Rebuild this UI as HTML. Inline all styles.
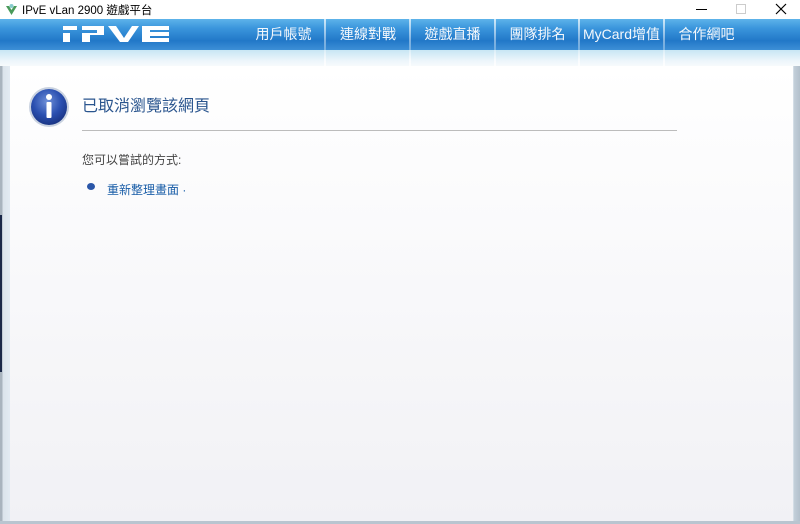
<!DOCTYPE html>
<html><head><meta charset="utf-8"><style>
*{margin:0;padding:0;box-sizing:border-box}
body{width:800px;height:524px;overflow:hidden;background:#fff;font-family:"Liberation Sans","Noto Sans CJK TC",sans-serif;position:relative}
.title{position:absolute;left:0;top:0;width:800px;height:19px;background:#fff;font-size:11.5px;color:#000}
.title .t{position:absolute;left:22px;top:2px}
.nav{position:absolute;left:0;top:19px;width:800px;height:31px;background:linear-gradient(#5eb3ea 0%,#3a95dc 30%,#2278c8 70%,#3d8fd6 100%)}
.glow{position:absolute;left:0;top:50px;width:800px;height:16px;background:linear-gradient(#c8e6f4,#eef6fb 70%,#f7fafc)}
.item{position:absolute;top:19px;height:47px;color:#f4f8fc;font-size:14px;text-align:center;line-height:30px;font-family:"Liberation Sans","Noto Sans CJK TC",sans-serif}
.sep{position:absolute;top:19px;width:2px;height:47px;background:linear-gradient(rgba(255,255,255,.7),rgba(255,255,255,.3) 65%,rgba(255,255,255,.8))}
.frame{position:absolute;left:0;top:66px;width:800px;height:458px;background:linear-gradient(90deg,#a9b4be 0,#a9b4be 2px,#dbe4ec 3px,#e3ebf2 10px,#e3ebf2 793px,#c3cfd9 794px,#b3c0cc 800px)}
.bottom{position:absolute;left:0;top:521px;width:800px;height:3px;background:#b9c5d0}
.content{position:absolute;left:10px;top:66px;width:783px;height:455px;background:linear-gradient(#ffffff,#f1f1f5)}
.leftdark{position:absolute;left:0;top:215px;width:2px;height:157px;background:#1a2848}
.h1{position:absolute;left:82px;top:92px;font-size:16px;color:#2a558e}
.hr{position:absolute;left:82px;top:130px;width:595px;height:1px;background:#bcbcbc}
.p{position:absolute;left:82px;top:151px;font-size:12px;color:#444}
.link{position:absolute;left:107px;top:181px;font-size:12px;color:#1a5ea8}
.dot{position:absolute;left:87px;top:183px;width:8px;height:7px;border-radius:50%;background:#2a56a8}
</style></head><body>
<div class="title">
<svg style="position:absolute;left:5px;top:3px" width="13" height="13" viewBox="0 0 13 13"><path d="M1 3 L6.5 12 L12 3 L9 3 L6.5 7 L4 3Z" fill="#4a9a5a"/><circle cx="6.5" cy="3" r="2" fill="#8cc"/></svg>
<span class="t">IPvE vLan 2900 遊戲平台</span>
<div style="position:absolute;left:696px;top:9px;width:11px;height:1px;background:#000"></div>
<div style="position:absolute;left:736px;top:4px;width:10px;height:10px;border:1px solid #ccc"></div>
<svg style="position:absolute;left:775px;top:3px" width="12" height="12"><path d="M1 1L11 11M11 1L1 11" stroke="#000" stroke-width="1.2"/></svg>
</div>
<div class="nav"></div>
<div class="glow"></div>
<svg style="position:absolute;left:62px;top:26px" width="110" height="17" viewBox="0 0 110 17">
<g fill="#fff"><rect x="1" y="0" width="14" height="4"/><rect x="1" y="7" width="7" height="9"/>
<path d="M20 0 H42 V9 H28 V16 H20 V7 H35 V4 H20Z"/>
<path d="M46 0 H54 L62 12 L70 0 H77 L66 16 H58Z"/>
<path d="M80 0 H107 V4 H88 V6 H107 V10 H88 V12 H107 V16 H80Z"/></g></svg>
<div class="item" style="left:242px;width:83px">用戶帳號</div>
<div class="sep" style="left:324px"></div>
<div class="item" style="left:326px;width:84px">連線對戰</div>
<div class="sep" style="left:409px"></div>
<div class="item" style="left:411px;width:83px">遊戲直播</div>
<div class="sep" style="left:494px"></div>
<div class="item" style="left:496px;width:83px">團隊排名</div>
<div class="sep" style="left:578px"></div>
<div class="item" style="left:580px;width:83px;font-size:14px">MyCard增值</div>
<div class="sep" style="left:663px"></div>
<div class="item" style="left:665px;width:83px">合作網吧</div>
<div class="frame"></div>
<div class="bottom"></div>
<div class="content"></div>
<div class="leftdark"></div>
<svg style="position:absolute;left:28px;top:86px" width="42" height="42" viewBox="0 0 42 42">
<defs><radialGradient id="g" cx="45%" cy="35%" r="65%"><stop offset="0" stop-color="#6f90d8"/><stop offset=".6" stop-color="#2a4fb0"/><stop offset="1" stop-color="#1a3585"/></radialGradient></defs>
<circle cx="21" cy="21" r="20" fill="#c9d2e0"/><circle cx="21" cy="21" r="18" fill="url(#g)"/>
<circle cx="21" cy="11" r="3" fill="#fff"/><rect x="18.5" y="16" width="5" height="16" rx="1" fill="#fff"/></svg>
<div class="h1">已取消瀏覽該網頁</div>
<div class="hr"></div>
<div class="p">您可以嘗試的方式:</div>
<div class="dot"></div>
<div class="link">重新整理畫面 ·</div>
</body></html>
